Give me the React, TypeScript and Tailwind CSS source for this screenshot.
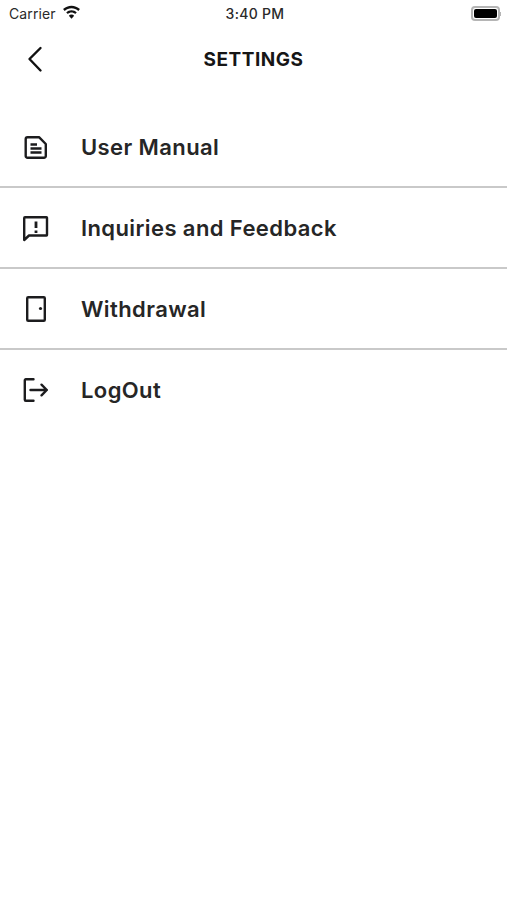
import type { ReactNode } from 'react';

function Icon({ children }: { children: ReactNode }) {
  return (
    <svg width="30" height="30" viewBox="0 0 30 30" fill="none" stroke="#1c1c1e" strokeWidth="2.4" strokeLinejoin="round" strokeLinecap="round">
      {children}
    </svg>
  );
}

const items = [
  {
    label: 'User Manual',
    icon: (
      <Icon>
        <path d="M6.500 4.200h11.500l6.800 6.800v12a1.800 1.800 0 0 1-1.800 1.800H6.500a1.800 1.800 0 0 1-1.800-1.800V6a1.800 1.800 0 0 1 1.800-1.800z" />
        <path d="M9.500 11.500h6.500M9.500 15.500h11M9.500 19.500h11" strokeLinecap="butt" />
      </Icon>
    ),
  },
  {
    label: 'Inquiries and Feedback',
    icon: (
      <Icon>
        <path d="M4 3.200h21.500a.5.5 0 0 1 .5.500v17.300a.5.5 0 0 1-.5.500H8L3.200 26V4a.8.8 0 0 1 .8-.8z" />
        <path d="M15 7.500v6.500M15 16.500v2.500" strokeWidth="2.800" strokeLinecap="butt" />
      </Icon>
    ),
  },
  {
    label: 'Withdrawal',
    icon: (
      <Icon>
        <rect x="6.200" y="2.200" width="17.600" height="23.600" rx="1" />
        <circle cx="19.500" cy="13.500" r="1.600" fill="#1c1c1e" stroke="none" />
      </Icon>
    ),
  },
  {
    label: 'LogOut',
    icon: (
      <Icon>
        <path d="M12.500 3.200H4.800a1 1 0 0 0-1 1v19.600a1 1 0 0 0 1 1h7.700" />
        <path d="M9.500 14H25.800M20.500 8.700 25.800 14l-5.300 5.300" />
      </Icon>
    ),
  },
];

export default function App() {
  return (
    <div className="min-h-[900px] bg-white font-['Inter',sans-serif]">
      {/* Status bar */}
      <div className="h-7 grid grid-cols-3 items-center pl-[9px] pr-[6px] pb-[1px] text-[#2a2a2a] text-[14px]">
        <div className="flex items-center gap-[6px]">
          <span className="text-[14px] tracking-[0.1px]">Carrier</span>
          <svg width="19" height="15" viewBox="0 0 18 14" fill="#111" className="-mt-[2px]">
            <path d="M9 .5C6 .5 3.200 1.700 1 3.800l1.600 1.700C4.300 3.800 6.600 2.900 9 2.900s4.700.9 6.400 2.600L17 3.800C14.800 1.700 12 .5 9 .5z" />
            <path d="M9 4.800c-1.900 0-3.700.8-5 2.100l1.600 1.600C6.500 7.600 7.700 7.100 9 7.100s2.500.5 3.400 1.400L14 6.900C12.700 5.600 10.900 4.800 9 4.800z" />
            <path d="M9 9c-1 0-1.900.4-2.500 1L9 13l2.500-3C10.900 9.400 10 9 9 9z" />
          </svg>
        </div>
        <div className="text-center font-medium tracking-[0.3px]">3:40 PM</div>
        <div className="flex justify-end items-center">
          <div className="w-[29px] h-[15px] rounded-[4px] border-2 border-[#b5b5b5] p-[1px] flex">
            <div className="flex-1 bg-black rounded-[2px]" />
          </div>
          <div className="w-[1px] h-[4px] bg-[#b5b5b5]" />
        </div>
      </div>

      {/* Header */}
      <div className="h-[62px] relative flex items-center justify-center">
        <svg className="absolute left-[23px] top-[15px]" width="22" height="30" viewBox="0 0 22 30" fill="none" stroke="#111" strokeWidth="2.400" strokeLinecap="round" strokeLinejoin="round">
          <path d="M17.500 5 6.500 16 17.500 27.500" />
        </svg>
        <h1 className="pt-[2px] text-[19px] font-bold tracking-[0.5px] text-[#161616]">SETTINGS</h1>
      </div>

      {/* Menu */}
      <div className="mt-[17px]">
        {items.map((item, i) => (
          <div
            key={item.label}
            className={`h-[81px] flex items-center pt-[2px] pl-[21px] border-b-2 ${i < items.length - 1 ? 'border-[#c9c9c9]' : 'border-transparent'}`}
          >
            <span className="w-[60px] flex">{item.icon}</span>
            <span className="text-[22px] font-semibold tracking-[0.4px] text-[#262626]">{item.label}</span>
          </div>
        ))}
      </div>
    </div>
  );
}
